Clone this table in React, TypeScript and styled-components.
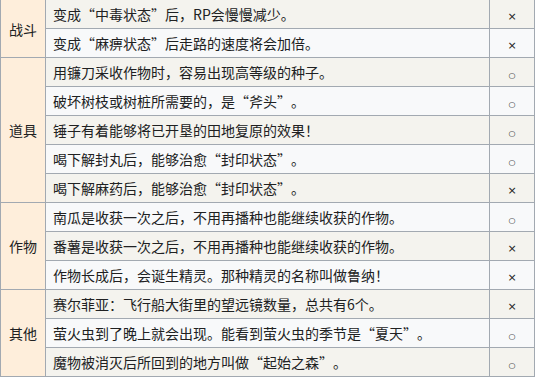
import styled, { createGlobalStyle } from "styled-components";

type Answer = "o" | "x";
type Group = { name: string; items: { q: string; a: Answer }[] };

const groups: Group[] = [
  {
    name: "战斗",
    items: [
      { q: "变成“中毒状态”后，RP会慢慢减少。", a: "x" },
      { q: "变成“麻痹状态”后走路的速度将会加倍。", a: "x" },
    ],
  },
  {
    name: "道具",
    items: [
      { q: "用镰刀采收作物时，容易出现高等级的种子。", a: "o" },
      { q: "破坏树枝或树桩所需要的，是“斧头”。", a: "o" },
      { q: "锤子有着能够将已开垦的田地复原的效果！", a: "o" },
      { q: "喝下解封丸后，能够治愈“封印状态”。", a: "o" },
      { q: "喝下解麻药后，能够治愈“封印状态”。", a: "x" },
    ],
  },
  {
    name: "作物",
    items: [
      { q: "南瓜是收获一次之后，不用再播种也能继续收获的作物。", a: "o" },
      { q: "番薯是收获一次之后，不用再播种也能继续收获的作物。", a: "x" },
      { q: "作物长成后，会诞生精灵。那种精灵的名称叫做鲁纳！", a: "x" },
    ],
  },
  {
    name: "其他",
    items: [
      { q: "赛尔菲亚：飞行船大街里的望远镜数量，总共有6个。", a: "x" },
      { q: "萤火虫到了晚上就会出现。能看到萤火虫的季节是“夏天”。", a: "o" },
      { q: "魔物被消灭后所回到的地方叫做“起始之森”。", a: "o" },
    ],
  },
];

// curly quotes take a full em box, as in the original page
const withQuotes = (text: string) =>
  text.split(/([“”])/).map((part, i) =>
    part === "“" || part === "”" ? (
      <Quote key={i} $open={part === "“"}>
        {part}
      </Quote>
    ) : (
      part
    )
  );

const GlobalStyle = createGlobalStyle`
  html, body {
    margin: 0;
    padding: 0;
    background: #ffffff;
  }
`;

const App = () => {
  let index = 0;
  return (
    <>
      <GlobalStyle />
      <QuizTable>
        <colgroup>
          <col style={{ width: 45 }} />
          <col />
          <col style={{ width: 45 }} />
        </colgroup>
        <tbody>
          {groups.map((group) =>
            group.items.map((item, i) => {
              const odd = index++ % 2 === 0;
              return (
                <Row key={item.q} $odd={odd}>
                  {i === 0 && (
                    <CategoryCell rowSpan={group.items.length}>
                      {group.name}
                    </CategoryCell>
                  )}
                  <QuestionCell>{withQuotes(item.q)}</QuestionCell>
                  <AnswerCell>
                    <Mark $kind={item.a}>{item.a === "o" ? "○" : "×"}</Mark>
                  </AnswerCell>
                </Row>
              );
            })
          )}
        </tbody>
      </QuizTable>
    </>
  );
};
export default App;

const QuizTable = styled.table`
  width: 535px;
  table-layout: fixed;
  border-collapse: collapse;
  font-family: "Noto Sans CJK SC", "Liberation Sans", sans-serif;
  font-size: 14px;
  line-height: 22px;
  color: #202122;
  tbody tr:first-child td {
    border-top: 0 none;
  }
`;

const Row = styled.tr<{ $odd: boolean }>`
  background-color: ${(p) => (p.$odd ? "#f4f3ee" : "#f8f9fa")};
`;

const Cell = styled.td`
  border: 1px solid #a2a9b1;
  padding: 3px 6px;
  height: 22px;
  white-space: nowrap;
  overflow: hidden;
`;

const CategoryCell = styled(Cell)`
  background-color: #feeedb;
  text-align: center;
  padding: 3px 0;
`;

const QuestionCell = styled(Cell)`
  text-align: start;
  padding-left: 7px;
`;

const AnswerCell = styled(Cell)`
  text-align: center;
  padding: 3px 0;
`;

const Quote = styled.span<{ $open: boolean }>`
  display: inline-block;
  width: 1em;
  text-align: ${(p) => (p.$open ? "right" : "left")};
`;

const Mark = styled.span<{ $kind: Answer }>`
  font-family: "DejaVu Sans", sans-serif;
  font-size: ${(p) => (p.$kind === "o" ? "8px" : "11px")};
  line-height: 1;
  color: #202122;
`;
